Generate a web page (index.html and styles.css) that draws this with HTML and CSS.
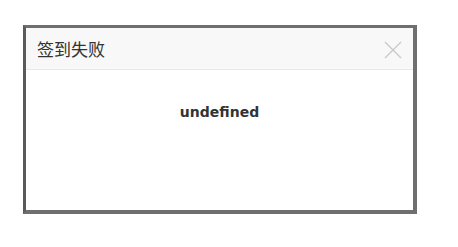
FILE: index.html
```html
<!DOCTYPE html>
<html lang="zh-CN">
<head>
<meta charset="utf-8">
<title>签到失败</title>
<link rel="stylesheet" href="styles.css">
</head>
<body>
<div class="frame">
  <div class="dialog">
    <div class="dialog-head">
      <span class="dialog-title">签到失败</span>
      <svg class="dialog-close" width="18" height="18" viewBox="0 0 18 18" aria-label="关闭">
        <path d="M1 1 L17 17 M17 1 L1 17" stroke="#c8c8c8" stroke-width="1.3" fill="none"/>
      </svg>
    </div>
    <div class="dialog-body">undefined</div>
  </div>
</div>
</body>
</html>
```
FILE: styles.css
```css
html, body {
  margin: 0;
  padding: 0;
  background: #ffffff;
}

body {
  padding: 25px 0 0 23px;
  font-family: "Noto Sans CJK SC", "DejaVu Sans", sans-serif;
}

.frame {
  width: 387px;
  height: 182px;
  border: 3px solid #6f6f6f;
  border-left-color: #5a5a5a;
  border-right-width: 4px;
  border-bottom-width: 4px;
}

.dialog {
  height: 100%;
  background: #ffffff;
  display: flex;
  flex-direction: column;
}

.dialog-head {
  height: 41px;
  background: #f8f8f8;
  border-bottom: 1px solid #e9e9e9;
  display: flex;
  align-items: center;
  justify-content: space-between;
  padding: 0 11px 0 11px;
}

.dialog-title {
  font-family: "Noto Sans CJK SC", sans-serif;
  font-size: 17px;
  color: #333333;
  line-height: 20px;
}

.dialog-close {
  display: block;
  margin-top: 2px;
}

.dialog-body {
  flex: 1;
  padding-top: 32px;
  text-align: center;
  font-family: "DejaVu Sans", sans-serif;
  font-weight: bold;
  font-size: 14px;
  line-height: 20px;
  color: #333333;
}
```
